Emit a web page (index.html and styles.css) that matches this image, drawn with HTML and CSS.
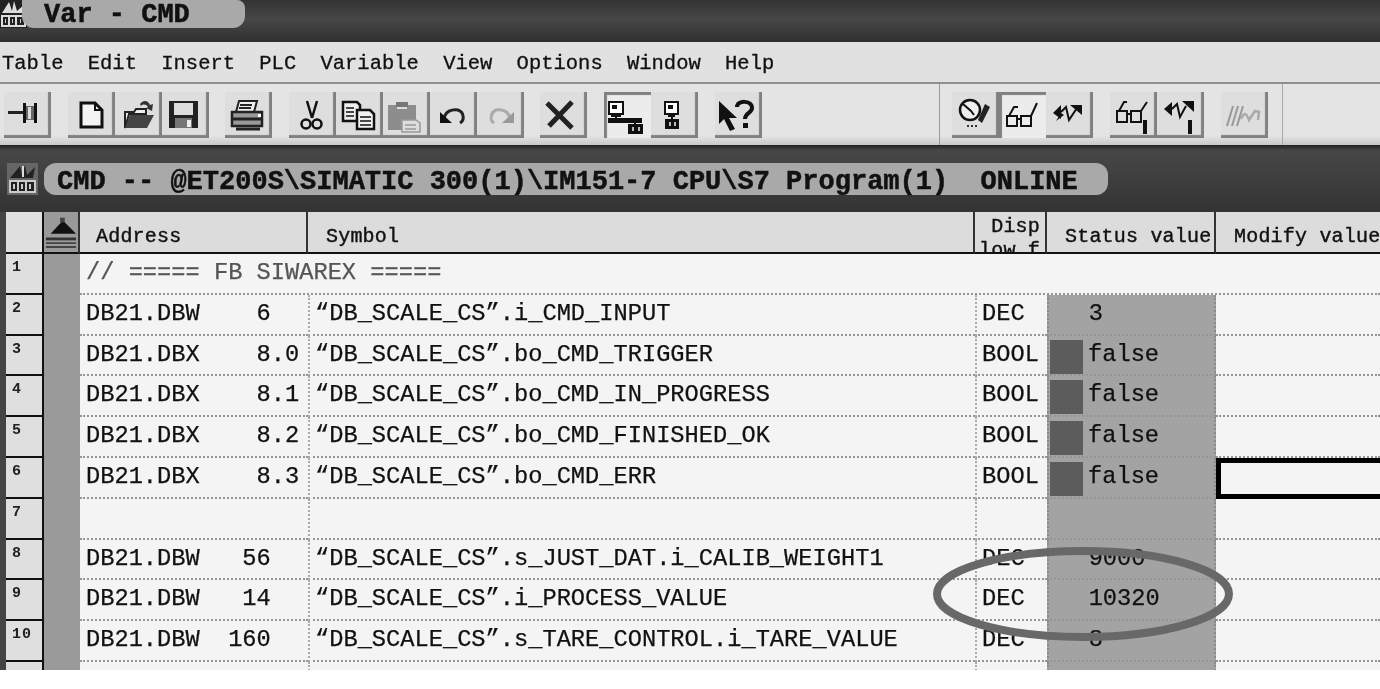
FILE: index.html
```html
<!DOCTYPE html>
<html>
<head>
    <title>Var - CMD</title>
    <link rel="stylesheet" href="styles.css">
</head>
<body>
<div class="app">
    <!-- Main window title -->
    <div class="title-bar">
        <svg class="app-icon" viewBox="0 0 27 28">
            <rect width="27" height="28" fill="#222"/>
            <path d="M2 13 9 2l3 9 2-10 3 10 8-7-3 9z" fill="#ddd"/>
            <rect x="1" y="15" width="25" height="12" fill="#ddd"/>
            <path d="M3 17h5v8H3zM10 17h5v8h-5zM17 17h7v8h-7z" fill="#222"/>
            <path d="M5 19h1v4H5zM12 19h1v4h-1zM20 19h1v4h-1z" fill="#ccc"/>
        </svg>
        <div class="title-tab">Var - CMD</div>
    </div>

    <div class="menu-bar">
        <span>Table</span><span>Edit</span><span>Insert</span><span>PLC</span><span>Variable</span><span>View</span><span>Options</span><span>Window</span><span>Help</span>
    </div>

    <div class="toolbar">
        <div class="tool-group">
            <div class="tool"><svg viewBox="0 0 47 46"><path d="M4 19h15v3H4z" fill="#222"/><path d="M19 11h3v20h-3zM30 11h3v20h-3z" fill="#111"/><path d="M22 14h8v14h-8z" fill="#666"/><path d="M24 15h3v12h-3z" fill="#ddd"/></svg></div>
        </div>
        <div class="tool-group">
            <div class="tool"><svg viewBox="0 0 47 46"><path d="M13 11h14l7 7v17H13z" fill="#f4f4f4" stroke="#111" stroke-width="3"/><path d="M27 11v7h7" fill="none" stroke="#111" stroke-width="2"/></svg></div>
            <div class="tool"><svg viewBox="0 0 47 46"><path d="M10 20h9l2-3h10v5H14l-4 14z" fill="#eee" stroke="#222" stroke-width="2"/><path d="M10 36l5-13h24l-7 13z" fill="#444"/><path d="M25 12c3-4 8-4 10 1l3-1-1 7-6-3 2-1c-2-3-5-3-7-1z" fill="#333"/></svg></div>
            <div class="tool"><svg viewBox="0 0 47 46"><path d="M7 9h29v27H7z" fill="#222"/><path d="M12 11h19v12H12z" fill="#ddd"/><path d="M13 26h17v10H13z" fill="#777"/><path d="M25 28h4v7h-4z" fill="#eee"/></svg></div>
        </div>
        <div class="tool-group">
            <div class="tool"><svg viewBox="0 0 47 46"><path d="M14 9h18l-3 11H11z" fill="#eee" stroke="#222" stroke-width="2"/><path d="M15 13h12M14 16h12" stroke="#222" stroke-width="2"/><path d="M7 20h30v14H7z" fill="#999" stroke="#222" stroke-width="2.5"/><path d="M8 27h28M11 37h24" stroke="#222" stroke-width="3"/><path d="M33 22h3v3h-3z" fill="#fff"/></svg></div>
        </div>
        <div class="tool-group">
            <div class="tool"><svg viewBox="0 0 47 46"><path d="M18 9l5 17M28 9l-5 17" fill="none" stroke="#111" stroke-width="2.5"/><circle cx="17" cy="32" r="4.5" fill="none" stroke="#111" stroke-width="2.5"/><circle cx="28" cy="32" r="4.5" fill="none" stroke="#111" stroke-width="2.5"/></svg></div>
            <div class="tool"><svg viewBox="0 0 47 46"><path d="M7 10h14l3 3v16H7z" fill="#eee" stroke="#111" stroke-width="2.5"/><path d="M10 16h8M10 20h8M10 24h8" stroke="#111" stroke-width="1.5"/><path d="M21 18h13l4 4v15H21z" fill="#f2f2f2" stroke="#111" stroke-width="2.5"/><path d="M24 25h11M24 29h11M24 33h11" stroke="#111" stroke-width="1.5"/></svg></div>
            <div class="tool"><svg viewBox="0 0 47 46"><path d="M5 13h28v25H5z" fill="#8d8d8d"/><path d="M13 10h12v5H13z" fill="#777"/><path d="M14 15h10v2H14z" fill="#ddd"/><path d="M19 28h14l4 3v9H19z" fill="#ddd" stroke="#999" stroke-width="1.5"/><path d="M22 33h11M22 37h11" stroke="#999" stroke-width="1.5"/></svg></div>
            <div class="tool"><svg viewBox="0 0 47 46"><path d="M14 27c1-8 8-10 14-9 6 2 7 10 2 13" fill="none" stroke="#222" stroke-width="3"/><path d="M10 20l12 11H10z" fill="#111"/></svg></div>
            <div class="tool"><svg viewBox="0 0 47 46"><path d="M33 27c-1-8-8-10-14-9-5 2-7 10-2 13" fill="none" stroke="#aaa" stroke-width="3"/><path d="M37 20 25 31h12z" fill="#999"/></svg></div>
        </div>
        <div class="tool-group">
            <div class="tool"><svg viewBox="0 0 47 46"><path d="M7 11l25 25" stroke="#222" stroke-width="5"/><path d="M32 10 9 34" stroke="#222" stroke-width="5"/></svg></div>
        </div>
        <div class="tool-group">
            <div class="tool tool-down"><svg viewBox="0 0 47 46"><path d="M5 10h14v12H5z" fill="#fff" stroke="#111" stroke-width="2"/><path d="M8 13h5v4H8z" fill="#111"/><path d="M7 23h10v2H7zM11 24h2v3h-2z" fill="#111"/><path d="M4 26h34v5H4z" fill="#111"/><path d="M30 30h2v2h-2z" fill="#111"/><path d="M24 32h15v10H24z" fill="#111"/><path d="M28 35h2v4h-2zM34 35h2v4h-2z" fill="#bbb"/></svg></div>
            <div class="tool"><svg viewBox="0 0 47 46"><path d="M14 10h13v12H14z" fill="#fff" stroke="#111" stroke-width="2"/><path d="M17 13h5v4h-5z" fill="#111"/><path d="M17 23h7v2h-7zM20 24h2v3h-2z" fill="#111"/><path d="M14 27h14v10H14z" fill="#111"/><path d="M18 30h2v4h-2zM23 30h2v4h-2z" fill="#bbb"/></svg></div>
        </div>
        <div class="tool-group">
            <div class="tool"><svg viewBox="0 0 47 46"><path d="M4 9v23l5-5 6 12 5-2-6-11h8z" fill="#111"/><path d="M22 15c0-7 15-7 15 1 0 5-7 5-7 11" fill="none" stroke="#111" stroke-width="4"/><path d="M28 31h5v5h-5z" fill="#111"/></svg></div>
        </div>
        <div class="toolbar-right">
            <div class="tool-group">
                <div class="tool"><svg viewBox="0 0 47 46"><circle cx="18" cy="18" r="10" fill="#eee" stroke="#111" stroke-width="2.5"/><path d="M11 12l8 7 3 4" fill="none" stroke="#111" stroke-width="2"/><path d="M33 12l5 3-8 16-4-3z" fill="#222"/><path d="M15 33h2v2h-2zM19 33h2v2h-2zM23 33h2v2h-2z" fill="#333"/></svg></div>
                <div class="tool tool-down"><svg viewBox="0 0 47 46"><g fill="none" stroke="#111" stroke-width="2"><path d="M8 24h10v10H8zM22 24h10v10H22zM18 27h4M10 24l5-9h4M32 24l6-13"/></g></svg></div>
                <div class="tool"><svg viewBox="0 0 47 46"><path d="M7 21l8-8v14z" fill="#111"/><path d="M15 20l5-5 3 13 8-12" fill="none" stroke="#111" stroke-width="2"/><path d="M24 13h12v10z" fill="#111"/><path d="M10 29l5-8 3 2z" fill="#111"/></svg></div>
            </div>
            <div class="tool-group">
                <div class="tool"><svg viewBox="0 0 47 46"><g fill="none" stroke="#111" stroke-width="2"><path d="M7 19h10v11H7zM21 19h10v11H21zM17 22h4M9 19l5-9h3M31 19l6-9"/></g><path d="M33 28h4v14h-4z" fill="#111"/></svg></div>
                <div class="tool"><svg viewBox="0 0 47 46"><path d="M7 17l8-7v14z" fill="#111"/><path d="M15 17l5-5 3 13 6-11" fill="none" stroke="#111" stroke-width="2"/><path d="M25 9h12v11z" fill="#111"/><path d="M31 28h4v14h-4z" fill="#111"/></svg></div>
            </div>
            <div class="tool-group">
                <div class="tool"><svg viewBox="0 0 47 46"><path d="M12 14 6 34M17 14l-6 20M22 14l-6 20" stroke="#999" stroke-width="2" fill="none"/><path d="M20 27c4-9 6-4 8 1l6-9 4 1-1 8" stroke="#aaa" stroke-width="2.5" fill="none"/></svg></div>
            </div>
        </div>
    </div>

    <!-- Table window title -->
    <div class="mdi-bar">
        <svg class="mdi-icon" viewBox="0 0 31 32">
            <rect width="31" height="32" fill="#666"/>
            <path d="M3 15 13 3l2 9 3-10 2 10 8-8-2 11z" fill="#222"/>
            <path d="M15 3h2v11h-2z" fill="#ddd"/>
            <rect x="2" y="17" width="27" height="13" fill="#ccc"/>
            <path d="M4 19h6v9H4zM12 19h6v9h-6zM20 19h7v9h-7z" fill="#222"/>
            <path d="M6 21h2v5H6zM14 21h2v5h-2zM22 21h2v5h-2z" fill="#ccc"/>
        </svg>
        <div class="mdi-tab">CMD -- @ET200S\SIMATIC 300(1)\IM151-7 CPU\S7 Program(1)  ONLINE</div>
    </div>

    <div class="grid">
        <div class="row row-header">
            <div class="row-head"></div>
            <div class="marker marker-top">
                <svg viewBox="0 0 36 40"><path d="M7 23 20 9l14 14z" fill="#111"/><path d="M17 6h5v5h-5z" fill="#444"/><path d="M2 27h32v3H2z" fill="#333"/><path d="M2 32h32v2H2zM2 36h32v2H2z" fill="#444"/></svg>
            </div>
            <div class="head-cell head-address">Address</div>
            <div class="head-cell">Symbol</div>
            <div class="head-cell head-disp">Disp<br>low f</div>
            <div class="head-cell">Status value</div>
            <div class="head-cell head-modify">Modify value</div>
        </div>

        <div class="row">
            <div class="row-head">1</div><div class="marker"></div>
            <div class="cell cell-comment">// ===== FB SIWAREX =====</div>
        </div>
        <div class="row">
            <div class="row-head">2</div><div class="marker"></div>
            <div class="cell">DB21.DBW    6</div>
            <div class="cell cell-line">“DB_SCALE_CS”.i_CMD_INPUT</div>
            <div class="cell cell-line">DEC</div>
            <div class="cell status">   3</div>
            <div class="cell"></div>
        </div>
        <div class="row">
            <div class="row-head">3</div><div class="marker"></div>
            <div class="cell">DB21.DBX    8.0</div>
            <div class="cell cell-line">“DB_SCALE_CS”.bo_CMD_TRIGGER</div>
            <div class="cell cell-line">BOOL</div>
            <div class="cell status status-bool"><span class="swatch"></span>false</div>
            <div class="cell"></div>
        </div>
        <div class="row">
            <div class="row-head">4</div><div class="marker"></div>
            <div class="cell">DB21.DBX    8.1</div>
            <div class="cell cell-line">“DB_SCALE_CS”.bo_CMD_IN_PROGRESS</div>
            <div class="cell cell-line">BOOL</div>
            <div class="cell status status-bool"><span class="swatch"></span>false</div>
            <div class="cell"></div>
        </div>
        <div class="row">
            <div class="row-head">5</div><div class="marker"></div>
            <div class="cell">DB21.DBX    8.2</div>
            <div class="cell cell-line">“DB_SCALE_CS”.bo_CMD_FINISHED_OK</div>
            <div class="cell cell-line">BOOL</div>
            <div class="cell status status-bool"><span class="swatch"></span>false</div>
            <div class="cell"></div>
        </div>
        <div class="row">
            <div class="row-head">6</div><div class="marker"></div>
            <div class="cell">DB21.DBX    8.3</div>
            <div class="cell cell-line">“DB_SCALE_CS”.bo_CMD_ERR</div>
            <div class="cell cell-line">BOOL</div>
            <div class="cell status status-bool"><span class="swatch"></span>false</div>
            <div class="cell cell-selected"></div>
        </div>
        <div class="row">
            <div class="row-head">7</div><div class="marker"></div>
            <div class="cell"></div>
            <div class="cell cell-line"></div>
            <div class="cell cell-line"></div>
            <div class="cell status"></div>
            <div class="cell"></div>
        </div>
        <div class="row">
            <div class="row-head">8</div><div class="marker"></div>
            <div class="cell">DB21.DBW   56</div>
            <div class="cell cell-line">“DB_SCALE_CS”.s_JUST_DAT.i_CALIB_WEIGHT1</div>
            <div class="cell cell-line">DEC</div>
            <div class="cell status">   9000</div>
            <div class="cell"></div>
        </div>
        <div class="row">
            <div class="row-head">9</div><div class="marker"></div>
            <div class="cell">DB21.DBW   14</div>
            <div class="cell cell-line">“DB_SCALE_CS”.i_PROCESS_VALUE</div>
            <div class="cell cell-line">DEC</div>
            <div class="cell status">   10320</div>
            <div class="cell"></div>
        </div>
        <div class="row">
            <div class="row-head">10</div><div class="marker"></div>
            <div class="cell">DB21.DBW  160</div>
            <div class="cell cell-line">“DB_SCALE_CS”.s_TARE_CONTROL.i_TARE_VALUE</div>
            <div class="cell cell-line">DEC</div>
            <div class="cell status">   8</div>
            <div class="cell"></div>
        </div>
        <div class="row">
            <div class="row-head"></div><div class="marker"></div>
            <div class="cell"></div>
            <div class="cell cell-line"></div>
            <div class="cell cell-line"></div>
            <div class="cell status"></div>
            <div class="cell"></div>
        </div>

        <!-- Hand drawn ring over rows 8 to 10 -->
        <svg class="ring" viewBox="0 0 300 94">
            <ellipse cx="150" cy="47" rx="146" ry="43" fill="none" stroke="#686868" stroke-width="8"/>
        </svg>
    </div>
</div>
</body>
</html>
```

FILE: styles.css
```css
body {
    margin: 0;
    background: #fff;
    font-family: "Liberation Mono", monospace;
    color: #111;
}

.app {
    height: 670px;
    overflow: hidden;
    filter: blur(0.4px);
}

/* Main title */
.title-bar {
    height: 42px;
    display: flex;
    align-items: flex-start;
    background: linear-gradient(to bottom, #333, #474747 45%, #2f2f2f);
}

.app-icon {
    width: 27px;
    height: 28px;
    flex: none;
}

.title-tab {
    margin-left: -5px;
    width: 223px;
    height: 28px;
    padding-left: 22px;
    box-sizing: border-box;
    background: #a9a9a9;
    border-radius: 0 8px 12px 12px;
    font-size: 27px;
    font-weight: bold;
    line-height: 31px;
    white-space: pre;
    -webkit-text-stroke: 0.5px #111;
}

/* Menu */
.menu-bar {
    height: 37px;
    display: flex;
    align-items: center;
    gap: 24.25px;
    padding: 3px 0 0 2px;
    background: #e1e1e1;
    border-bottom: 2px solid #8e8e8e;
    font-size: 20.5px;
    -webkit-text-stroke: 0.3px #111;
}

/* Toolbars */
.toolbar {
    height: 61px;
    display: flex;
    gap: 16.6px;
    padding: 8px 0 0 4px;
    box-sizing: border-box;
    background: linear-gradient(to bottom, #e4e4e4 85%, #c8c8c8);
}

.tool-group {
    display: flex;
}

.tool {
    width: 47px;
    height: 46px;
    background: #dedede;
    box-shadow: inset -3px -3px 1px #808080;
}

.tool svg {
    display: block;
    width: 47px;
    height: 46px;
}

.tool-down {
    background: #ececec;
    box-shadow: inset 3px 3px 1px #808080;
}

.toolbar-right {
    display: flex;
    gap: 17px;
    height: 61px;
    margin: -8px 0 0 161px;
    padding: 8px 14px 0 12px;
    box-sizing: border-box;
    border-left: 1px solid #999;
    border-right: 1px solid #aaa;
}

/* Table window title */
.mdi-bar {
    height: 67px;
    display: flex;
    align-items: flex-start;
    gap: 6px;
    padding: 18px 0 0 7px;
    box-sizing: border-box;
    background: linear-gradient(to bottom, #222 0, #474747 8%, #3c3c3c 60%, #333);
}

.mdi-icon {
    width: 31px;
    height: 32px;
    flex: none;
}

.mdi-tab {
    width: 1064px;
    height: 32px;
    padding: 3px 0 0 13px;
    box-sizing: border-box;
    background: #a9a9a9;
    border-radius: 12px;
    font-size: 27px;
    font-weight: bold;
    line-height: 32px;
    white-space: pre;
    -webkit-text-stroke: 0.5px #111;
}

/* Table */
.grid {
    position: relative;
    border-left: 6px solid #444;
    background: #f4f4f4;
}

.row {
    display: grid;
    grid-template-columns: 38px 36px 228px 667px 72px 169px 1fr;
    height: 40.8px;
}

.row-header {
    height: 42px;
    background: #dcdcdc;
}

.row-head {
    padding: 5px 0 0 6px;
    box-sizing: border-box;
    background: #dfdfdf;
    border-right: 2px solid #111;
    border-bottom: 2px solid #111;
    font-size: 15px;
    font-weight: bold;
    letter-spacing: 1px;
    color: #222;
}

.marker {
    background: #9a9a9a;
}

.marker-top {
    border-bottom: 2px solid #111;
    border-right: 2px solid #333;
}

.marker-top svg {
    display: block;
}

.head-cell {
    padding: 13px 0 0 18px;
    box-sizing: border-box;
    border-right: 2px solid #333;
    border-bottom: 2px solid #111;
    overflow: hidden;
    font-size: 20px;
    letter-spacing: 0.2px;
    white-space: pre;
    -webkit-text-stroke: 0.4px #111;
}

.head-address {
    padding-left: 16px;
}

.head-disp {
    padding: 3px 5px 0 0;
    text-align: right;
    line-height: 24px;
}

.head-modify {
    border-right: none;
}

.cell {
    padding-left: 6px;
    box-sizing: border-box;
    border-bottom: 2px dotted #969696;
    font-size: 23.7px;
    line-height: 37px;
    white-space: pre;
    -webkit-text-stroke: 0.25px #111;
}

.cell-comment {
    grid-column: 3 / 8;
    color: #555;
    -webkit-text-stroke: 0.25px #555;
}

.cell-line {
    padding-left: 5px;
    border-left: 2px dotted #aaa;
}

.status {
    padding-left: 0;
    text-indent: -3px;
    border-left: 2px dotted #8a8a8a;
    border-right: 2px dotted #8a8a8a;
    background: #a3a3a3;
}

.status-bool {
    display: flex;
    text-indent: 0;
}

.swatch {
    width: 33px;
    height: 34px;
    margin: 4px 5px 0 1px;
    background: #5c5c5c;
    flex: none;
}

.cell-selected {
    border: 5px solid #000;
    border-right: none;
}

.ring {
    position: absolute;
    left: 927px;
    top: 335px;
    width: 300px;
    height: 94px;
}
```
